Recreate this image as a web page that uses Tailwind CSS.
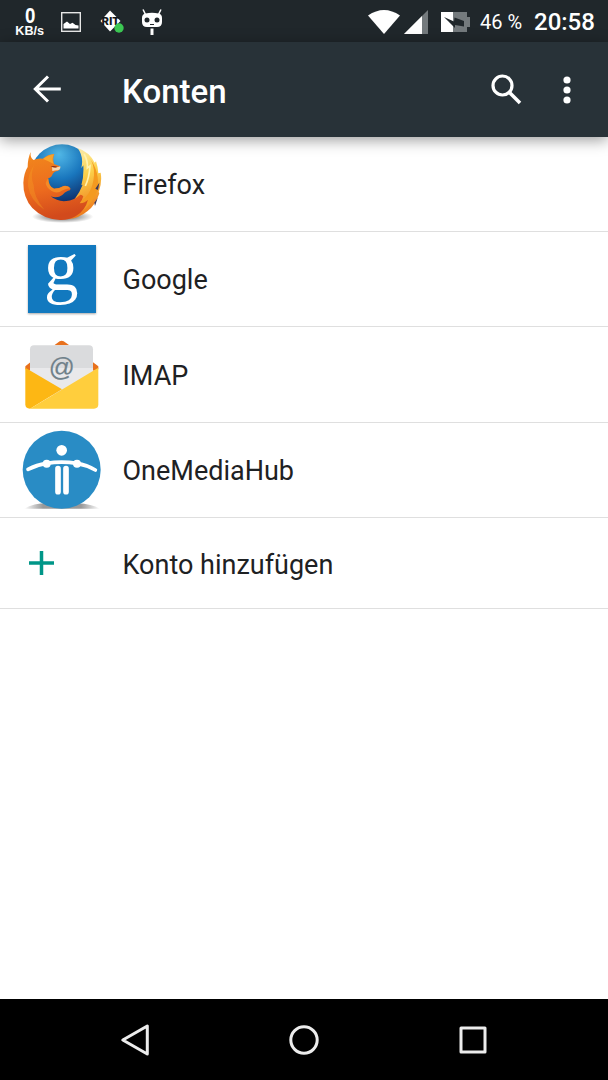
<!DOCTYPE html>
<html lang="de">
<head>
  <meta charset="UTF-8" />
  <title>Konten</title>
  <meta name="viewport" content="width=device-width, initial-scale=1" />
  <script src="https://cdn.jsdelivr.net/npm/@tailwindcss/browser@4"></script>
</head>
<body class="bg-white font-['Roboto',sans-serif] text-[#1e2123]">
  <div class="w-[608px] h-[1080px] flex flex-col overflow-hidden">

    <!-- Status Bar -->
    <div class="h-[42px] shrink-0 bg-[#20272b] text-white flex items-center justify-between pl-[15px] pr-[14px] pt-px">
      <div class="flex items-center">
        <div class="w-[30px] flex flex-col items-center font-['Liberation_Sans',sans-serif] font-bold">
          <span class="text-[22px] leading-[18px] scale-x-85">0</span>
          <span class="text-[12px] leading-[12px] scale-x-105">KB/s</span>
        </div>
        <svg class="w-[20px] h-[20px] ml-[16px]" viewBox="0 0 20 20">
          <rect x="0.7" y="0.7" width="18.6" height="18.6" fill="none" stroke="#e6e6e6" stroke-width="1.4" />
          <path d="M2.500 16.500V12l3.500-2.500 3 2.500 2.500-1.300 3 2.300 3 .5v3z" fill="#fff" />
        </svg>
        <svg class="w-[24px] h-[24px] ml-[20px] overflow-visible" viewBox="0 0 24 24">
          <path d="M9 .5L19.500 11 9 21.500-.5 11z" fill="#fff" />
          <text x="0.500" y="14.500" font-size="10" font-weight="900" textLength="18" lengthAdjust="spacingAndGlyphs" fill="#14181a">RIT</text>
          <circle cx="18" cy="18" r="4.700" fill="#3cc853" />
        </svg>
        <svg class="w-[22px] h-[28px] ml-[16px]" viewBox="0 0 22 28">
          <path d="M4.500 6.500L2.300 2M17.500 6.500L19.700 2" stroke="#fff" stroke-width="1.500" stroke-linecap="round" />
          <path d="M4.500 5.500Q11 4 17.500 5.500Q21 6 21 10v4q0 5-5 5H6q-5 0-5-5v-4q0-4 3.500-4.500z" fill="#fff" />
          <circle cx="6" cy="12" r="2.500" fill="#20272b" />
          <circle cx="16" cy="12" r="2.500" fill="#20272b" />
          <path d="M9 16.500h4" stroke="#20272b" />
          <path d="M11 20.500v6.500" stroke="#fff" stroke-width="3" />
        </svg>
      </div>

      <div class="flex items-center">
        <svg class="w-[32px] h-[24px]" viewBox="0 0 32 24">
          <path d="M0 5.500Q16-5.500 32 5.500L16 24z" fill="#fff" />
        </svg>
        <svg class="w-[24px] h-[24px] ml-[4px]" viewBox="0 0 24 24">
          <path d="M24 0v24H0z" fill="#747a7d" />
          <path d="M18 6v18H0z" fill="#fff" />
        </svg>
        <svg class="w-[29px] h-[20px] ml-[13px]" viewBox="0 0 29 20">
          <path d="M12 0h14v5h3v10h-3v5H12z" fill="#747a7d" />
          <path d="M0 0h12v20H0z" fill="#fff" />
          <path d="M3 5l10 4.500L13.500 5.500 23 9v5.500l-9-1.500v3z" fill="#20272b" />
        </svg>
        <span class="text-[20px] leading-none ml-[10px] w-[54px] whitespace-nowrap">46 %</span>
        <span class="text-[24px] leading-none font-medium w-[60px] whitespace-nowrap">20:58</span>
      </div>
    </div>

    <!-- Action Bar -->
    <header class="relative z-10 h-[95px] shrink-0 bg-[#283238] text-white flex items-center pl-[33px] pr-[37px] shadow-[0_3px_14px_rgba(0,0,0,0.4)]">
      <svg class="w-[28px] h-[28px] -mt-px" viewBox="0 0 28 28" fill="none" stroke="#fff" stroke-width="3">
        <path d="M27.800 14H2.500M15 1.500L2.300 14 15 26.500" />
      </svg>
      <h1 class="text-[33px] leading-none font-medium ml-[61px] mt-[4px] flex-1">Konten</h1>
      <svg class="w-[31px] h-[31px]" viewBox="0 0 31 31" fill="none" stroke="#fff">
        <circle cx="11.500" cy="11.500" r="9.500" stroke-width="3.200" />
        <path d="M18 18l11 11" stroke-width="3.600" />
      </svg>
      <svg class="w-[8px] h-[28px] ml-[41px]" viewBox="0 0 8 28" fill="#fff">
        <circle cx="4" cy="4" r="3.600" />
        <circle cx="4" cy="14" r="3.600" />
        <circle cx="4" cy="24" r="3.600" />
      </svg>
    </header>

    <!-- Accounts -->
    <ul class="flex-1 text-[27px] leading-none">
      <li class="h-[95px] border-b border-[#dfdfdf] flex items-center">
        <div class="w-[122.500px] pl-[22px]">
          <svg class="w-[80px] h-[80px]" viewBox="36 24 240 240">
            <defs>
              <radialGradient id="globe" cx="0.45" cy="0.15" r="0.8">
                <stop offset="0" stop-color="#52b9e8" />
                <stop offset="0.5" stop-color="#1976bd" />
                <stop offset="1" stop-color="#0c2a66" />
              </radialGradient>
              <linearGradient id="fox" x1="0" y1="0" x2="0.2" y2="1">
                <stop offset="0" stop-color="#f28a1c" />
                <stop offset="0.6" stop-color="#ec6a1e" />
                <stop offset="1" stop-color="#d24a1c" />
              </linearGradient>
              <linearGradient id="tail" x1="0" y1="0" x2="0.2" y2="1">
                <stop offset="0" stop-color="#fff6c0" />
                <stop offset="0.45" stop-color="#fbd04a" />
                <stop offset="1" stop-color="#ee7a1c" />
              </linearGradient>
              <radialGradient id="shade">
                <stop offset="0.3" stop-color="#000" stop-opacity="0.5" />
                <stop offset="1" stop-color="#000" stop-opacity="0" />
              </radialGradient>
            </defs>
            <ellipse cx="158" cy="242" rx="92" ry="19" fill="url(#shade)" />
            <circle cx="156" cy="120" r="95" fill="url(#globe)" />
            <path d="M203 36Q238 48 254 80L258 76Q264 94 265 112L272 110Q277 140 266 168L268 172Q258 206 232 226Q206 247 178 249Q190 210 206 190L192 192Q210 168 218 146L214 148Q222 120 220 88L214 96Q222 62 203 36z" fill="url(#tail)" />
            <path d="M236 62Q254 84 252 118Q250 150 236 172Q226 188 212 196Q222 208 210 228Q246 208 262 164Q272 108 236 62z" fill="#f49a20" />
            <path d="M222 54Q234 74 232 96L240 90Q238 124 226 150" fill="none" stroke="#fff3b0" stroke-width="5" />
            <path d="M256 158l12-18-4 22zM253 200l10-14-8 24z" fill="#3a3658" />
            <path d="M62 48Q60 65 70 72Q83 66 99 68Q114 55 133 54Q127 68 132 84L150 91Q152 101 144 104Q131 105 127 116Q126 123 114 127Q114 153 132 158Q148 158 160 150Q174 147 182 158Q181 164 174 164Q164 168 157 177Q142 188 122 181Q143 198 169 195Q191 194 209 178Q211 174 220 181Q216 195 209 202Q226 200 234 191Q226 223 198 240Q176 253 150 252Q99 249 67 216Q39 184 40 140Q42 110 53 93Q53 68 62 48z" fill="url(#fox)" />
            <path d="M72 88Q52 116 54 151Q61 195 103 221Q71 183 71 148Q60 120 72 88z" fill="#f69a22" opacity="0.4" />
            <path d="M115 127Q116 153 132 158Q150 158 162 150Q174 148 181 157Q159 160 149 168Q128 174 112 154Q102 140 115 127z" fill="#f58a26" />
            <path d="M99 69Q113 57 132 55Q124 68 131 84Q118 76 99 69z" fill="#f9a52a" />
            <path d="M126 92Q139 97 151 91Q152 101 144 103Q134 104 127 105z" fill="#f7d7b1" />
            <path d="M122 91q10-3 20 1q-8 6-20-1z" fill="#8c2d18" />
          </svg>
        </div>
        <span class="mt-[3px]">Firefox</span>
      </li>
      <li class="h-[95px] border-b border-[#dfdfdf] flex items-center">
        <div class="w-[122.500px] pl-[28px]">
          <svg class="w-[68px] h-[68px] bg-[#1279bf] shadow-[0_1px_2px_rgba(0,0,0,0.35)] overflow-visible" viewBox="0 0 68 68">
            <text x="16" y="44.500" font-family="Liberation Serif, serif" font-size="69" fill="#fff">g</text>
          </svg>
        </div>
        <span class="mt-[3px]">Google</span>
      </li>
      <li class="h-[96px] border-b border-[#dfdfdf] flex items-center">
        <div class="w-[122.500px] pl-[25px]">
          <svg class="w-[74px] h-[69px]" viewBox="45 36 222 207">
            <path d="M133 52L149 40Q155 36 161 40L178 52zM46 124V115L61 103V128zM265 124V115L249 103V128z" fill="#e8711d" />
            <path d="M60 64Q60 52 72 52H237Q249 52 249 64V200H60z" fill="#dadbdd" />
            <path d="M60 120H249V200H60z" fill="#e9e9eb" />
            <text x="116" y="143" font-family="Liberation Sans, sans-serif" font-size="77" fill="#70818a" stroke="#70818a" stroke-width="0.500">@</text>
            <path d="M46 119L156 184L60 242Q46 242 46 229z" fill="#fdb714" />
            <path d="M265 119V229Q265 242 252 242H60z" fill="#ffce3d" />
          </svg>
        </div>
        <span class="mt-[3px]">IMAP</span>
      </li>
      <li class="h-[95px] border-b border-[#dfdfdf] flex items-center">
        <div class="w-[122.500px] pl-[22px]">
          <svg class="w-[80px] h-[80px]" viewBox="36 24 240 240">
            <defs>
              <linearGradient id="ground" x1="0" x2="1">
                <stop offset="0" stop-color="#999" stop-opacity="0" />
                <stop offset="0.25" stop-color="#999" />
                <stop offset="0.75" stop-color="#999" />
                <stop offset="1" stop-color="#999" stop-opacity="0" />
              </linearGradient>
            </defs>
            <path d="M42 260Q72 244 110 244H202Q245 246 270 260z" fill="url(#ground)" />
            <circle cx="155" cy="143" r="117" fill="#298cc5" />
            <circle cx="155" cy="85" r="16" fill="#fff" />
            <path d="M54 142Q80 128 109 124Q155 117 201 124Q230 129 256 144" fill="none" stroke="#fff" stroke-width="11" stroke-linecap="round" />
            <circle cx="110" cy="125" r="12" fill="#fff" />
            <circle cx="201" cy="125" r="12" fill="#fff" />
            <path d="M144 140V209M168 140V209" stroke="#fff" stroke-width="17" stroke-linecap="round" />
          </svg>
        </div>
        <span class="mt-[3px]">OneMediaHub</span>
      </li>
      <li class="h-[91px] border-b border-[#dfdfdf] flex items-center">
        <div class="w-[122.500px] pl-[29px]">
          <svg class="w-[25px] h-[24px]" viewBox="0 0 25 24" stroke="#009688" stroke-width="3.500">
            <path d="M12.500 0v24M0 12h25" />
          </svg>
        </div>
        <span class="mt-[4px]">Konto hinzufügen</span>
      </li>
    </ul>

    <!-- Navigation Bar -->
    <nav class="h-[81px] shrink-0 bg-black flex items-center justify-between pl-[120px] pr-[120px]">
      <svg class="w-[30px] h-[34px]" viewBox="0 0 30 34" fill="none" stroke="#ececec" stroke-width="3" stroke-linejoin="round">
        <path d="M27.300 3v28L2.800 17z" />
      </svg>
      <svg class="w-[32px] h-[32px]" viewBox="0 0 32 32" fill="none" stroke="#ececec" stroke-width="3">
        <circle cx="16" cy="16" r="13.200" />
      </svg>
      <svg class="w-[30px] h-[30px]" viewBox="0 0 30 30" fill="none" stroke="#ececec" stroke-width="3" stroke-linejoin="round">
        <rect x="3" y="3" width="24" height="24" />
      </svg>
    </nav>
  </div>
</body>
</html>
